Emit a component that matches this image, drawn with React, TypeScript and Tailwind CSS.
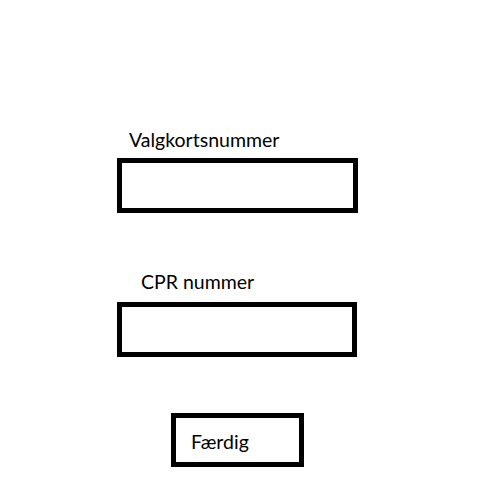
export default function App() {
  return (
    <div className="relative h-[499px] w-[491px] bg-white font-['Lato',sans-serif] text-[19.5px] text-black">
      <div className="flex flex-col">
        {/* Valgkortsnummer */}
        <div className="mt-[129px] h-[22px] pl-[129px] leading-[22px]">Valgkortsnummer</div>
        <div className="mt-[7px] ml-[117px] h-[55px] w-[241px] border-[5px] border-black" />

        {/* CPR nummer */}
        <div className="mt-[58px] h-[22px] pl-[141px] leading-[22px]">CPR nummer</div>
        <div className="mt-[9px] ml-[117px] h-[55px] w-[240px] border-[5px] border-black" />

        {/* Færdig */}
        <div className="mt-[56px] ml-[171px] flex h-[54px] w-[133px] items-center border-[5px] border-black pl-[15px] pt-[4px] leading-[22px]">
          Færdig
        </div>
      </div>
    </div>
  );
}
